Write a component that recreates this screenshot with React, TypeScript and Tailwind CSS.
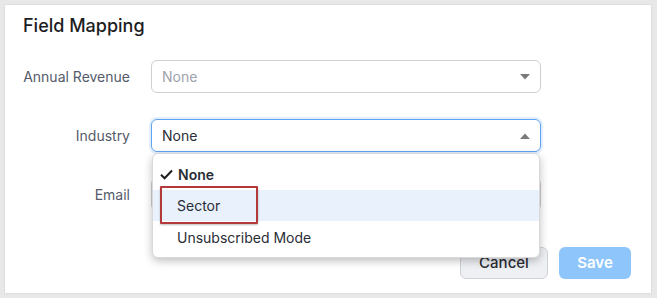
import React from "react";

const Caret = ({ up }: { up?: boolean }) => (
  <svg width="10" height="6" viewBox="0 0 10 6" className="shrink-0">
    {up ? <path d="M0 6 L5 0.5 L10 6 Z" fill="#7a7a7a" /> : <path d="M0 0 L10 0 L5 5.5 Z" fill="#7a7a7a" />}
  </svg>
);

export default function App() {
  return (
    <div className="w-[657px] h-[298px] bg-[#e8e8e8] pl-[5px] pt-[5px]" style={{ fontFamily: "Inter, 'Noto Sans', sans-serif" }}>
      <div className="w-[646px] h-[288px] bg-white relative shadow-[0_0_2px_rgba(0,0,0,0.12)]">
        <div className="pl-[18px] pt-[8px] text-[18px] font-medium text-[#1d1d1f] leading-[26px]">Field Mapping</div>
        <div className="flex flex-col gap-[26px] mt-[21px]">
          <div className="flex items-center">
            <div className="w-[125px] text-right text-[14px] text-[#555b6b]">Annual Revenue</div>
            <div className="ml-[21px] w-[390px] h-[33px] border border-[#cfcfcf] rounded-[6px] flex items-center justify-between px-[10px]">
              <span className="text-[14px] text-[#9ea2ad]">None</span>
              <Caret />
            </div>
          </div>
          <div className="flex items-center relative">
            <div className="w-[125px] text-right text-[14px] text-[#555b6b]">Industry</div>
            <div className="ml-[21px] w-[390px] h-[33px] border border-[#5ea3f2] rounded-[6px] flex items-center justify-between px-[10px] shadow-[0_0_0_2px_rgba(94,163,242,0.18)]">
              <span className="text-[14px] text-[#2a2d35]">None</span>
              <Caret up />
            </div>
            <div className="absolute left-[147px] top-[34px] w-[388px] h-[105px] bg-white rounded-[6px] border border-[#d9d9d9] shadow-[0_3px_8px_rgba(0,0,0,0.25)] z-10 pt-[4px]">
              <div className="h-[32px] flex items-center pl-[7px] text-[14px] font-semibold text-[#2a2d35]">
                <svg width="13" height="11" viewBox="0 0 13 11" className="mr-[5px]">
                  <path d="M1 5.8 L4.6 9.3 L12 1.5" stroke="#1f1f1f" strokeWidth="2" fill="none" />
                </svg>
                None
              </div>
              <div className="h-[31px] bg-[#e8f1fc] flex items-center relative">
                <span className="pl-[24px] text-[14px] text-[#2a2d35]">Sector</span>
                <div className="absolute left-[7px] top-[-4px] w-[98px] h-[38px] border-2 border-[#b33a3a] rounded-[1px] shadow-[0_1px_2px_rgba(0,0,0,0.25)]" />
              </div>
              <div className="h-[33px] flex items-center pl-[24px] text-[14px] text-[#2a2d35]">Unsubscribed Mode</div>
            </div>
          </div>
          <div className="flex items-center">
            <div className="w-[125px] text-right text-[14px] text-[#555b6b]">Email</div>
            <div className="ml-[21px] w-[390px] h-[33px] border border-[#cfcfcf] rounded-[6px] flex items-center justify-between px-[10px]">
              <span className="text-[14px] text-[#9ea2ad]">None</span>
              <Caret />
            </div>
          </div>
        </div>
        <div className="flex justify-end gap-[11px] pr-[20px] mt-[36px]">
          <div className="w-[88px] h-[32px] rounded-[6px] border border-[#cfd2d8] bg-[#eef0f4] flex items-center justify-center text-[15px] font-medium text-[#2a2d35]">Cancel</div>
          <div className="w-[72px] h-[32px] rounded-[6px] bg-[#8ec6fb] flex items-center justify-center text-[15px] font-semibold text-white">Save</div>
        </div>
      </div>
    </div>
  );
}
